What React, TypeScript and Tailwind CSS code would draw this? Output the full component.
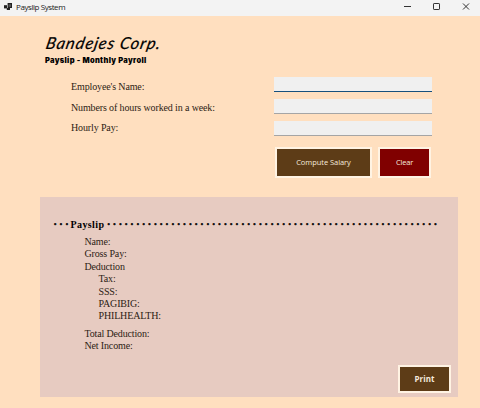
import type { ReactNode } from "react";

const serif = "font-['Liberation_Serif',serif]";

function AppIcon() {
  return (
    <svg width="9" height="8" viewBox="0 0 9 8" fill="#222">
      <rect x="3.6" y="0" width="4.4" height="5" />
      <rect x="4.6" y="1.3" width="2.4" height="2.6" fill="#555" />
      <rect x="0" y="2.2" width="3" height="3.2" />
      <rect x="2.8" y="5" width="3.2" height="2" />
    </svg>
  );
}

function TitleBar() {
  return (
    <header className="flex h-4 shrink-0 items-start bg-[#f3f3f3] pt-[3px] pl-1">
      <AppIcon />
      <span className="ml-[3px] w-[60px] font-['Open_Sans',sans-serif] text-[8px] leading-[8px] tracking-[-0.42px] whitespace-nowrap text-[#222]">
        Payslip System
      </span>
      <svg className="ml-auto" width="80" height="9" viewBox="400 3 80 9" fill="none" stroke="#333" strokeWidth="1">
        <path d="M404 6.5h7" />
        <rect x="433.5" y="3.5" width="6" height="6" rx=".6" />
        <path d="M463 3.5l6 6m0-6l-6 6" />
      </svg>
    </header>
  );
}

function Field({ label, focused, className }: { label: string; focused?: boolean; className: string }) {
  return (
    <label className={`flex ${className}`}>
      <span className={`w-[203px] text-[10px] leading-3 tracking-[-0.13px] whitespace-nowrap ${focused ? "pt-1" : label === "Hourly Pay:" ? "pt-px" : "pt-[3px]"}`}>
        {label}
      </span>
      <input
        className={`h-[15px] w-[158px] border-b bg-[#f0f0f0] outline-none ${focused ? "border-[#17507c]" : "border-[#a5a5a5]"}`}
      />
    </label>
  );
}

function Button({ children, className }: { children: ReactNode; className: string }) {
  return (
    <button className={`flex items-center justify-center font-['Open_Sans',sans-serif] whitespace-nowrap ${className}`}>
      {children}
    </button>
  );
}

function Line({ children, indent }: { children: ReactNode; indent?: boolean }) {
  return (
    <div className={`h-[12.4px] text-[10px] leading-3 tracking-[-0.15px] whitespace-nowrap ${indent ? "pl-3.5" : ""}`}>{children}</div>
  );
}

export default function App() {
  return (
    <div className={`flex h-[408px] w-[480px] flex-col overflow-hidden bg-[#ffdfbf] text-[#2d1c14] ${serif}`}>
      <TitleBar />
      <div className="h-[61px] pt-[17px] pl-[45px] text-black">
        <h1 className="-ml-px h-[21px] origin-bottom-left -skew-x-12 font-['Lato',cursive] text-[16.5px] leading-5 tracking-[0.9px] whitespace-nowrap italic [-webkit-text-stroke:0.2px_black]">
          Bandejes Corp.
        </h1>
        <p className="mt-0.5 font-['Inter',sans-serif] text-[7.5px] leading-[9px] font-black tracking-[0.33px] whitespace-nowrap">
          Payslip - Monthly Payroll
        </p>
      </div>
      <div className="flex h-[70px] flex-col pl-[71px]">
        <Field label="Employee's Name:" focused className="h-[21.5px]" />
        <Field label="Numbers of hours worked in a week:" className="h-[22px]" />
        <Field label="Hourly Pay:" className="h-[21px]" />
      </div>
      <div className="flex h-[50px] gap-1.5 pl-[275px]">
        <Button className="h-[31px] w-[97px] border-2 border-[#fff3e3] bg-[#5d3c17] text-[7.5px] tracking-[-0.05px] text-[#f5e9dc]">Compute Salary</Button>
        <Button className="h-[31px] w-[53px] border-2 border-[#fff3e3] bg-[#800000] text-[7.5px] tracking-[-0.2px] text-[#f5e9dc]">Clear</Button>
      </div>
      <section className="ml-10 flex h-[200px] w-[418px] flex-col bg-[#e7cbc1] pt-[21px] pl-[13.5px]">
        <div className="flex h-[18px] pt-px text-[10px] leading-3 font-bold whitespace-nowrap text-black">
          <span className="w-[17px] [-webkit-text-stroke:0.5px_black]">· · ·</span>
          <span className="w-[36.5px] tracking-[0.4px]">Payslip</span>
          <span className="[-webkit-text-stroke:0.5px_black]">{Array(57).fill("·").join(" ")}</span>
        </div>
        <div className="pl-[31px]">
          <Line>Name:</Line>
          <Line>Gross Pay:</Line>
          <Line>Deduction</Line>
          <Line indent>Tax:</Line>
          <Line indent>SSS:</Line>
          <Line indent>PAGIBIG:</Line>
          <Line indent>PHILHEALTH:</Line>
          <div className="h-[5px]" />
          <Line>Total Deduction:</Line>
          <Line>Net Income:</Line>
        </div>
        <Button className="mt-[12px] ml-[344.5px] h-7 w-[53px] shrink-0 border-2 border-[#fff3e3] bg-[#5d3c17] text-[8px] font-bold text-[#f5e9dc]">
          Print
        </Button>
      </section>
    </div>
  );
}
